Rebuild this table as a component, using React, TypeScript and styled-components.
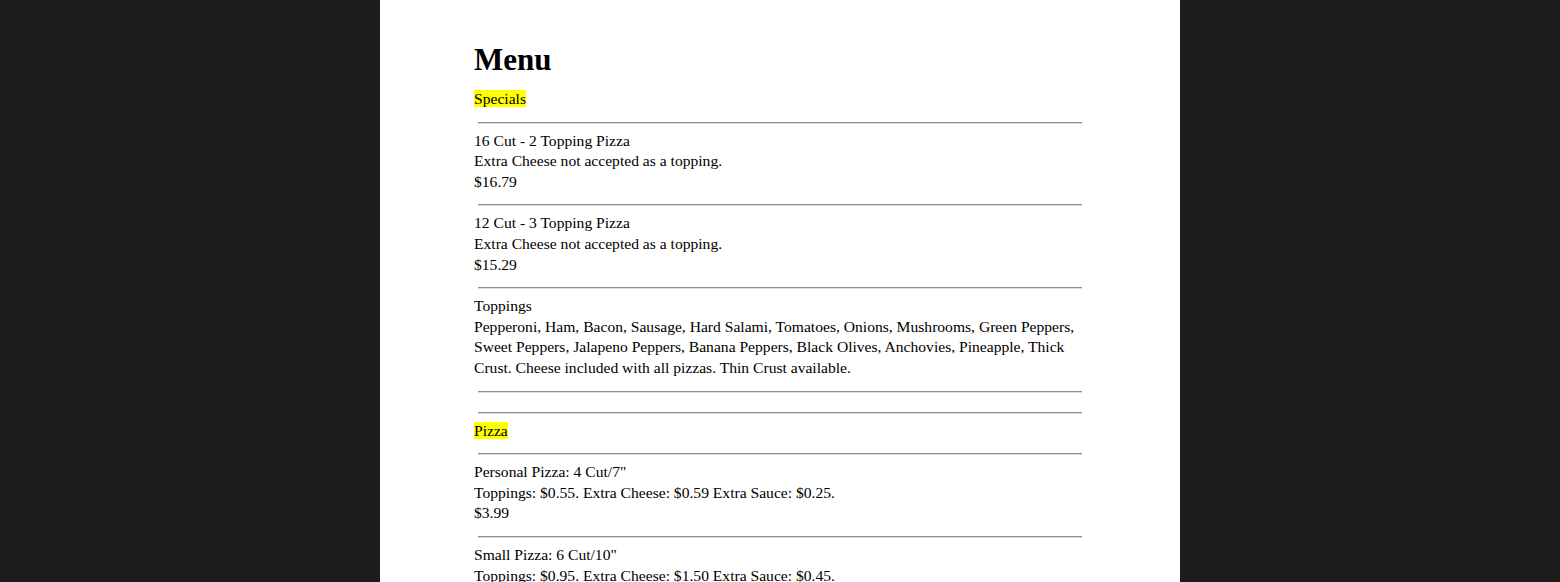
import React from "react";
import styled, { createGlobalStyle } from "styled-components";

type Item = {
  title?: string;
  label?: string;
  lines?: string[];
};

const blocks: Item[] = [
  { label: "Specials" },
  {
    title: "16 Cut - 2 Topping Pizza",
    lines: ["Extra Cheese not accepted as a topping.", "$16.79"],
  },
  {
    title: "12 Cut - 3 Topping Pizza",
    lines: ["Extra Cheese not accepted as a topping.", "$15.29"],
  },
  {
    title: "Toppings",
    lines: [
      "Pepperoni, Ham, Bacon, Sausage, Hard Salami, Tomatoes, Onions, Mushrooms, Green Peppers, Sweet Peppers, Jalapeno Peppers, Banana Peppers, Black Olives, Anchovies, Pineapple, Thick Crust. Cheese included with all pizzas. Thin Crust available.",
    ],
  },
  {},
  { label: "Pizza" },
  {
    title: 'Personal Pizza: 4 Cut/7"',
    lines: ["Toppings: $0.55. Extra Cheese: $0.59 Extra Sauce: $0.25.", "$3.99"],
  },
  {
    title: 'Small Pizza: 6 Cut/10"',
    lines: ["Toppings: $0.95. Extra Cheese: $1.50 Extra Sauce: $0.45.", "$6.99"],
  },
];

const App: React.FC = () => {
  return (
    <Page>
      <GlobalStyle />
      <Sheet>
        <Title>Menu</Title>
        {blocks.map((block, index) => (
          <React.Fragment key={index}>
            {index > 0 && <Rule />}
            <Block>
              {block.label && <Highlight>{block.label}</Highlight>}
              {block.title && <Line>{block.title}</Line>}
              {block.lines?.map((line) => (
                <Line key={line}>{line}</Line>
              ))}
            </Block>
          </React.Fragment>
        ))}
      </Sheet>
    </Page>
  );
};

export default App;

const GlobalStyle = createGlobalStyle`
  html, body {
    margin: 0;
    padding: 0;
    background: #1c1c1c;
  }
`;

const Page = styled.div`
  display: flex;
  justify-content: center;
  min-height: 100vh;
  background: #1c1c1c;
  font-family: "Liberation Serif", "Times New Roman", serif;
  color: #000;
`;

const Sheet = styled.div`
  width: 800px;
  box-sizing: border-box;
  padding: 42px 94px 40px;
  background: #fff;
  display: flex;
  flex-direction: column;
`;

const Title = styled.h1`
  margin: 0 0 4px;
  font-size: 31px;
  line-height: 36px;
  font-weight: bold;
`;

const Block = styled.div`
  padding: 7px 0 12px;
  font-size: 15.6px;
  line-height: 20.6px;
`;

const Line = styled.div``;

const Highlight = styled.mark`
  background: #ffff00;
  color: #000;
`;

const Rule = styled.hr`
  margin: 0 4px;
  height: 0;
  border: none;
  border-top: 1px solid #8c8c8c;
  border-bottom: 1px solid #dcdcdc;
`;
